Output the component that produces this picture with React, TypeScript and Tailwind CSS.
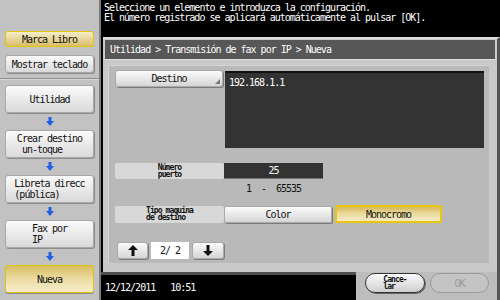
import React from "react";

const mono = "font-['DejaVu_Sans_Mono',monospace] tracking-[-1px]";
const tiny = "font-['DejaVu_Sans_Mono',monospace] text-[8px] leading-[7px] tracking-[-0.9px] font-bold";

function DownArrow() {
  return (
    <svg width="8" height="9" viewBox="0 0 8 9">
      <path d="M2.5 0h3v4h2.5L4 9 0 4h2.5z" fill="#1f5fe6" />
    </svg>
  );
}

function PagerArrow({ up }: { up?: boolean }) {
  return (
    <svg width="10" height="11" viewBox="0 0 10 11">
      {up ? (
        <path d="M5 0l5 5H6.5v6h-3V5H0z" fill="#111" />
      ) : (
        <path d="M5 11l5-5H6.5V0h-3v6H0z" fill="#111" />
      )}
    </svg>
  );
}

function SideButton({ label, active }: { label: string; active?: boolean }) {
  return (
    <div
      className={
        active
          ? "h-[28px] mx-[5px] rounded-[3px] border border-[#e2c30a] bg-gradient-to-b from-[#d9bd62] via-[#ecdca2] to-[#f6eccb] flex items-center justify-center shadow-[0_1px_0_#8a8a8a]"
          : "h-[28px] mx-[5px] rounded-[3px] border border-[#a8a8a8] bg-gradient-to-b from-[#fbfbfb] to-[#d9d9d9] flex items-center justify-center shadow-[1px_1px_0_#8c8c8c]"
      }
    >
      <span className={`${mono} text-[10px] leading-[11px] text-[#111] whitespace-pre text-left`}>{label}</span>
    </div>
  );
}

function Arrow() {
  return (
    <div className="h-[17px] flex items-center justify-center">
      <DownArrow />
    </div>
  );
}

export default function App() {
  return (
    <div className="w-[500px] h-[300px] flex bg-black overflow-hidden">
      {/* sidebar */}
      <aside className="w-[101px] bg-[#c2c2c2] border-r-2 border-[#7c7c7c] flex flex-col">
        <div className="h-[78px] pt-[31px]">
          <div className="h-[16px] mx-[5px] rounded-[3px] border border-[#e4c40c] bg-gradient-to-b from-[#f6edc8] to-[#d8bd66] flex items-center justify-center">
            <span className={`${mono} text-[10px] text-[#111]`}>Marca Libro</span>
          </div>
          <div className="h-[18px] mt-[8px] mx-[5px] rounded-[3px] border border-[#a8a8a8] bg-gradient-to-b from-[#fbfbfb] to-[#d9d9d9] shadow-[1px_1px_0_#8c8c8c] flex items-center justify-center">
            <span className={`${mono} text-[10px] text-[#111]`}>Mostrar teclado</span>
          </div>
        </div>
        <div className="h-[2px] border-t border-[#8e8e8e] bg-[#d8d8d8]" />
        <div className="pt-[5px] flex flex-col">
          <SideButton label="Utilidad" />
          <Arrow />
          <SideButton label={"Crear destino\n un-toque"} />
          <Arrow />
          <SideButton label={"Libreta direcc\n(pública)"} />
          <Arrow />
          <SideButton label={"Fax por\nIP"} />
          <Arrow />
          <SideButton label="Nueva" active />
        </div>
      </aside>

      {/* main */}
      <main className="flex-1 flex flex-col">
        <header className={`h-[37px] pt-[3px] pl-[3px] text-white text-[10px] leading-[10px] ${mono}`}>
          <p>Seleccione un elemento e introduzca la configuración.</p>
          <p>El número registrado se aplicará automáticamente al pulsar [OK].</p>
        </header>

        <section className="ml-[2px] h-[235px] bg-[#c9c9c9] border-t-2 border-[#dcdcdc] border-r-[3px] border-r-[#555] flex flex-col pt-[1px] px-[2px]">
          <div className={`h-[20px] bg-[#575757] border-b border-[#e0e0e0] flex items-center pl-[5px] text-white text-[10px] ${mono}`}>
            Utilidad &gt; Transmisión de fax por IP &gt; Nueva
          </div>
          <div className="mt-[5px] ml-[3px] mr-[6px] h-[198px] bg-[#b9b9b9] border-l border-t border-[#d6d6d6] pt-[4px] pl-[6px] pr-[5px] flex flex-col">
            <div className="flex items-start">
              <div className="relative w-[108px] h-[17px] mr-[2px] rounded-[3px] bg-gradient-to-b from-[#fbfbfb] to-[#d6d6d6] border border-[#aaaaaa] shadow-[1px_1px_0_#7c7c7c] flex items-center justify-center">
                <span className={`${mono} text-[10px] text-[#111]`}>Destino</span>
                <svg className="absolute right-[2px] bottom-[2px]" width="5" height="5" viewBox="0 0 5 5">
                  <path d="M5 0v5H0z" fill="#777" />
                </svg>
              </div>
              <div className={`mt-[1px] flex-1 h-[77px] bg-[#333] border-t-2 border-[#111] pl-[4px] pt-[2px] text-white text-[10px] ${mono}`}>
                192.168.1.1
              </div>
            </div>

            <div className="mt-[15px] flex">
              <div className="w-[109px] h-[16px] rounded-[2px] bg-[#d8d8d8] flex items-center justify-center">
                <span className={`${tiny} text-[#111] whitespace-pre text-left`}>{"Número\npuerto"}</span>
              </div>
              <div className={`w-[99px] h-[16px] bg-[#333] border-b border-[#777] flex items-center justify-center text-white text-[10px] ${mono}`}>
                25
              </div>
            </div>
            <div className="mt-[4px] flex">
              <div className="w-[109px]" />
              <div className={`w-[99px] h-[11px] flex items-center justify-center text-[#111] text-[10px] whitespace-pre ${mono}`}>
                {"1  -  65535"}
              </div>
            </div>

            <div className="mt-[11px] flex items-center">
              <div className="w-[109px] h-[17px] rounded-[2px] bg-[#d8d8d8] flex items-center justify-center">
                <span className={`${tiny} text-[#111] whitespace-pre text-left`}>{"Tipo maquina\nde destino"}</span>
              </div>
              <div className="w-[108px] h-[17px] rounded-[2px] bg-gradient-to-b from-[#fbfbfb] to-[#d6d6d6] border border-[#aaaaaa] shadow-[1px_1px_0_#7c7c7c] flex items-center justify-center">
                <span className={`${mono} text-[10px] text-[#111]`}>Color</span>
              </div>
              <div className="ml-[3px] w-[107px] h-[18px] rounded-[2px] bg-gradient-to-b from-[#d6b95c] via-[#ecdca0] to-[#f4eac6] border-2 border-[#e8c70c] flex items-center justify-center">
                <span className={`${mono} text-[10px] text-[#111]`}>Monocromo</span>
              </div>
            </div>

            <div className="mt-[19px] ml-[2px] flex items-center">
              <div className="w-[31px] h-[17px] rounded-[3px] bg-gradient-to-b from-[#fbfbfb] to-[#d6d6d6] border border-[#aaaaaa] shadow-[1px_1px_0_#7c7c7c] flex items-center justify-center">
                <PagerArrow up />
              </div>
              <div className={`ml-[3px] w-[38px] h-[17px] bg-white flex items-center justify-center text-[#111] text-[10px] whitespace-pre ${mono}`}>
                {"2/ 2"}
              </div>
              <div className="ml-[3px] w-[32px] h-[17px] rounded-[3px] bg-gradient-to-b from-[#fbfbfb] to-[#d6d6d6] border border-[#aaaaaa] shadow-[1px_1px_0_#7c7c7c] flex items-center justify-center">
                <PagerArrow />
              </div>
            </div>
          </div>
        </section>

        <footer className="h-[28px] flex">
          <div className={`w-[255px] bg-black border-t-[3px] border-[#4e4e4e] flex items-center pl-[4px] text-white text-[10px] whitespace-pre ${mono}`}>
            {"12/12/2011   10:51"}
          </div>
          <div className="flex-1 bg-[#bdbdbd] border-r-[3px] border-[#555] flex items-start pt-[1px] pl-[9px]">
            <div className="w-[60px] h-[20px] rounded-full border border-[#333] bg-gradient-to-b from-[#fbfbfb] to-[#cfcfcf] shadow-[1px_1px_0_#666] flex items-center justify-center">
              <span className={`${tiny} text-[#111] whitespace-pre text-left`}>{"Cance-\nlar"}</span>
            </div>
            <div className="ml-[5px] w-[59px] h-[20px] rounded-full border border-[#9a9a9a] bg-[#c4c4c4] flex items-center justify-center">
              <span className={`${mono} text-[10px] text-[#9a9a9a]`}>OK</span>
            </div>
          </div>
        </footer>
      </main>
    </div>
  );
}
